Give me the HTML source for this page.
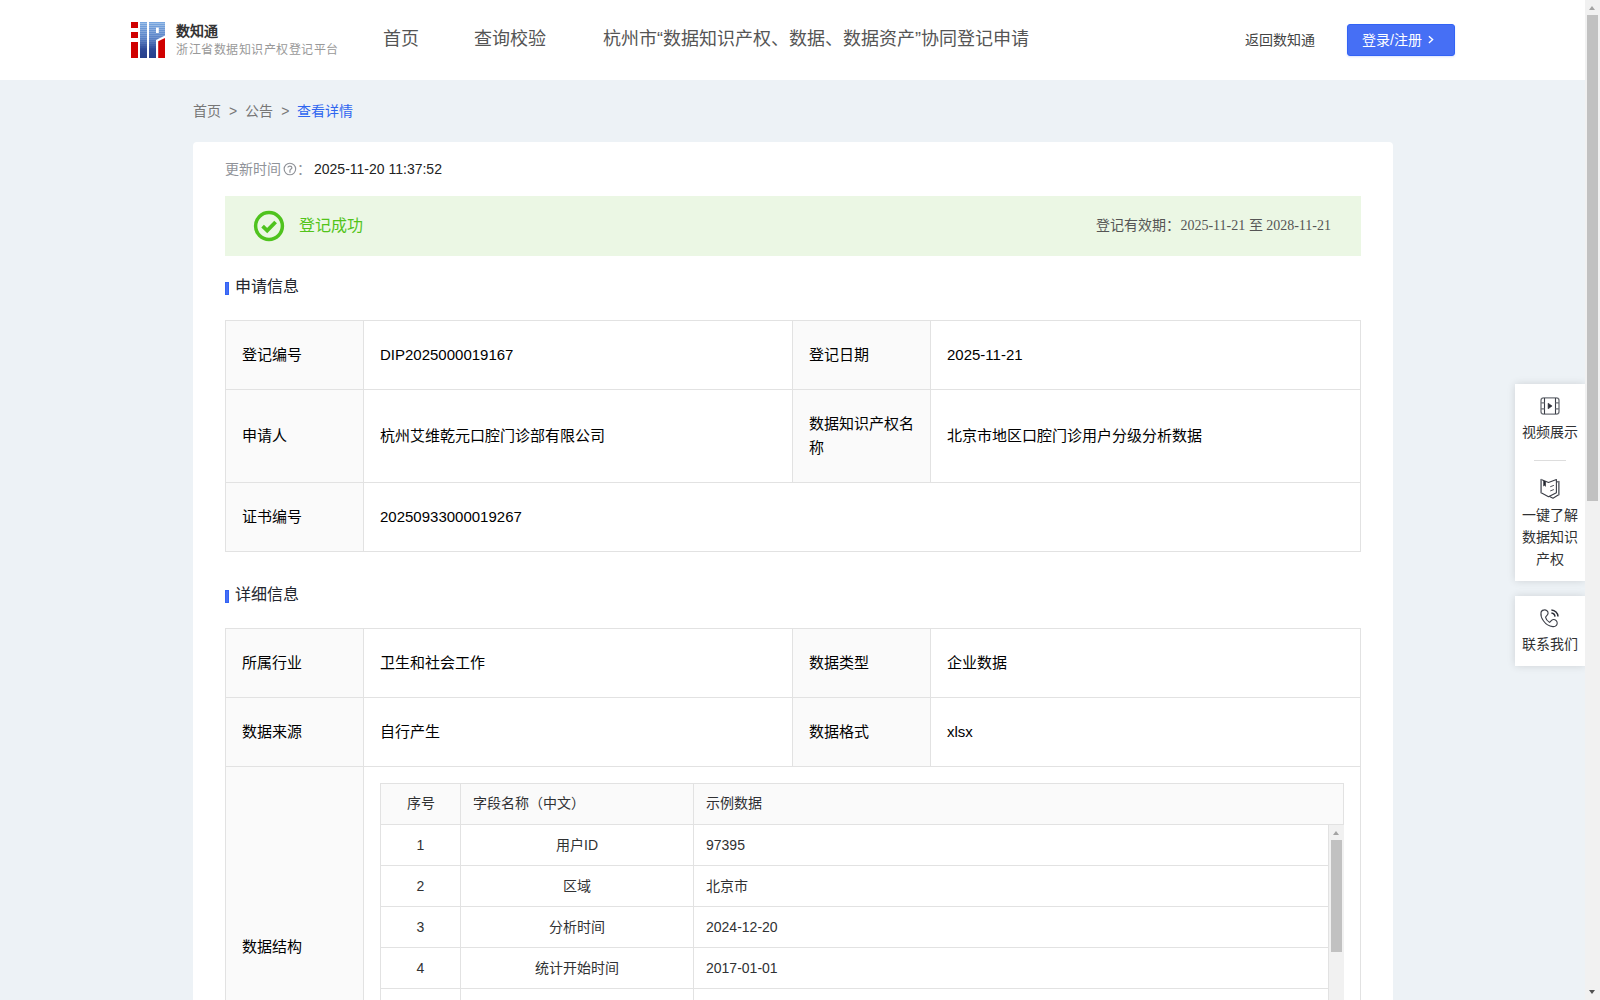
<!DOCTYPE html>
<html lang="zh-CN">
<head>
<meta charset="utf-8">
<title>查看详情</title>
<style>
*{box-sizing:border-box;margin:0;padding:0}
html,body{width:1600px;height:1000px;overflow:hidden;background:#edf2f6;font-family:"Liberation Sans",sans-serif;color:#333;font-size:14px}
#page{position:absolute;left:0;top:0;width:1585px;height:1000px;overflow:hidden;background:#edf2f6}
#hdr{position:absolute;left:0;top:0;width:1585px;height:80px;background:#fff}
.abs{position:absolute;white-space:nowrap}
.t{position:absolute;white-space:nowrap;line-height:20px;height:20px}
#sb{position:absolute;left:1585px;top:0;width:15px;height:1000px;background:#f1f1f1}
#sb .th{position:absolute;left:2px;top:15px;width:11px;height:486px;background:#c1c1c1}
.arr{position:absolute;width:0;height:0;border-left:3.5px solid transparent;border-right:3.5px solid transparent}
.arr.up{border-bottom:4px solid #a3a3a3}
.arr.dn{border-top:4px solid #505050}
#card{position:absolute;left:193px;top:142px;width:1200px;height:900px;background:#fff;border-radius:4px}
#banner{position:absolute;left:225px;top:196px;width:1136px;height:60px;background:#ebf7e4}
.sec{position:absolute;left:225px;height:20px;line-height:20px;font-size:16px;color:#23262f;white-space:nowrap}
.sec i{position:absolute;left:0;top:5px;width:4px;height:13px;background:#466ff5;border:1px solid #3263f5}
.sec span{position:absolute;left:11px;top:0}
table{border-collapse:collapse;table-layout:fixed}
.info{position:absolute;left:225px;width:1135px}
.info td{border:1px solid #e2e2e2;font-size:15px;line-height:24px;padding:22px 16px 22px 16px;color:#000;vertical-align:middle;word-break:break-all}
.info td.l{background:#fafafa;padding-right:12px}

#t2row3{position:absolute;left:225px;top:766px;width:1136px;height:300px;border:1px solid #e2e2e2}
#t2row3 .lc{position:absolute;left:0;top:0;width:138px;height:300px;background:#fafafa;border-right:1px solid #e2e2e2}
.in{position:absolute;font-size:14px;color:#303133}
.in td{border:1px solid #e2e2e2;height:41px;line-height:20px;padding:0 12px 1px 12px;font-size:14px;color:#303133;vertical-align:middle;white-space:nowrap}
.in td.c{text-align:center}
.in tr.h td{background:#fafafa;color:#303133;padding-bottom:2px}
.fl{position:absolute;left:1515px;width:70px;background:#fff;box-shadow:0 0 8px rgba(0,0,0,.13)}
.ft{position:absolute;left:1515px;width:70px;text-align:center;font-size:14px;line-height:22px;height:22px;color:#303133;white-space:nowrap}
</style>
</head>
<body>
<div id="page">
<div id="hdr">
<svg class="abs" style="left:131px;top:22px" width="34" height="36" viewBox="0 0 34 36">
<defs><linearGradient id="g" x1="0" y1="0" x2="0" y2="1"><stop offset="0" stop-color="#79a8e0"/><stop offset="0.45" stop-color="#5a82c6"/><stop offset="0.75" stop-color="#2f4a98"/><stop offset="1" stop-color="#27408b"/></linearGradient><clipPath id="lc"><rect x="9" y="0" width="7" height="36"/><path d="M18 0H34V13.6L25 18V36H18Z M25 5.5V11H27.8V5.5Z" clip-rule="evenodd"/></clipPath></defs>
<rect x="0" y="0" width="7" height="6" fill="#d00000"/>
<rect x="0" y="10" width="7" height="6" fill="#d00000"/>
<rect x="0" y="20" width="7" height="16" fill="#d00000"/>
<rect x="9" y="0" width="7" height="36" fill="url(#g)"/>
<path d="M18 0H34V13.6L25 18V36H18Z M25 5.5V11H27.8V5.5Z" fill="url(#g)" fill-rule="evenodd"/>
<g clip-path="url(#lc)"><rect x="9" y="1" width="7" height="1" fill="#fff" opacity="0.3"/><rect x="18" y="1" width="16" height="1" fill="#fff" opacity="0.3"/><rect x="9" y="3" width="7" height="1" fill="#fff" opacity="0.277"/><rect x="18" y="3" width="16" height="1" fill="#fff" opacity="0.277"/><rect x="9" y="5" width="7" height="1" fill="#fff" opacity="0.254"/><rect x="18" y="5" width="16" height="1" fill="#fff" opacity="0.254"/><rect x="9" y="7" width="7" height="1" fill="#fff" opacity="0.231"/><rect x="18" y="7" width="16" height="1" fill="#fff" opacity="0.231"/><rect x="9" y="9" width="7" height="1" fill="#fff" opacity="0.208"/><rect x="18" y="9" width="16" height="1" fill="#fff" opacity="0.208"/><rect x="9" y="11" width="7" height="1" fill="#fff" opacity="0.185"/><rect x="18" y="11" width="16" height="1" fill="#fff" opacity="0.185"/><rect x="9" y="13" width="7" height="1" fill="#fff" opacity="0.162"/><rect x="18" y="13" width="16" height="1" fill="#fff" opacity="0.162"/><rect x="9" y="15" width="7" height="1" fill="#fff" opacity="0.138"/><rect x="18" y="15" width="16" height="1" fill="#fff" opacity="0.138"/><rect x="9" y="17" width="7" height="1" fill="#fff" opacity="0.115"/><rect x="18" y="17" width="16" height="1" fill="#fff" opacity="0.115"/><rect x="9" y="19" width="7" height="1" fill="#fff" opacity="0.092"/><rect x="18" y="19" width="16" height="1" fill="#fff" opacity="0.092"/><rect x="9" y="21" width="7" height="1" fill="#fff" opacity="0.069"/><rect x="18" y="21" width="16" height="1" fill="#fff" opacity="0.069"/><rect x="9" y="23" width="7" height="1" fill="#fff" opacity="0.046"/><rect x="18" y="23" width="16" height="1" fill="#fff" opacity="0.046"/><rect x="9" y="25" width="7" height="1" fill="#fff" opacity="0.023"/><rect x="18" y="25" width="16" height="1" fill="#fff" opacity="0.023"/></g><path d="M27.2 19.2L34 16V36H27.2Z" fill="#d00000"/>
</svg>
<div class="t" style="left:176px;top:21px;font-size:14px;font-weight:bold;color:#333">数知通</div>
<div class="t" style="left:176px;top:40px;font-size:12px;letter-spacing:0.5px;color:#999">浙江省数据知识产权登记平台</div>
<div class="t" style="left:383px;top:29px;font-size:18px;color:#555">首页</div>
<div class="t" style="left:474px;top:29px;font-size:18px;color:#555">查询校验</div>
<div class="t" style="left:603px;top:29px;font-size:18px;color:#555">杭州市“数据知识产权、数据、数据资产”协同登记申请</div>
<div class="t" style="left:1245px;top:30px;font-size:14px;color:#444">返回数知通</div>
<div class="abs" style="left:1347px;top:24px;width:108px;height:32px;background:#466ff5;border:1px solid #3263f5;border-radius:3px;box-shadow:0 1px 2px rgba(70,111,245,.2)"></div>
<div class="t" style="left:1362px;top:30px;font-size:14px;color:#fff">登录/注册</div>
<svg class="abs" style="left:1426px;top:33px" width="12" height="14" viewBox="0 0 12 14"><path d="M2.9 3.3L6.6 6.6L2.9 9.9" fill="none" stroke="#fff" stroke-width="1.4"/></svg>
</div>

<div class="t" style="left:193px;top:101px;font-size:14px;color:#777">首页<span style="margin:0 8px">&gt;</span>公告<span style="margin:0 8px">&gt;</span><span style="color:#2f66f0">查看详情</span></div>

<div id="card"></div>
<div class="t" style="left:225px;top:159px;font-size:14px;color:#909399">更新时间</div>
<svg class="abs" style="left:283px;top:162px" width="14" height="15" viewBox="0 0 14 15"><circle cx="6.9" cy="7" r="5.75" fill="none" stroke="#909399" stroke-width="1.15"/><path d="M4.9 5.6C4.9 3.7 8.9 3.7 8.9 5.7C8.9 7 7 7 6.95 8.6V10.7" fill="none" stroke="#909399" stroke-width="1.2"/></svg>
<div class="t" style="left:297px;top:159px;font-size:14px;color:#909399">：</div>
<div class="t" style="left:314px;top:159px;font-size:14px;color:#222">2025-11-20 11:37:52</div>

<div id="banner"></div>
<svg class="abs" style="left:253px;top:210px" width="32" height="32" viewBox="0 0 32 32"><circle cx="16" cy="16" r="13.4" fill="none" stroke="#4fc31e" stroke-width="3.5"/><path d="M9.6 16.2L14.2 20.6L22.6 12" fill="none" stroke="#4fc31e" stroke-width="3.8" stroke-linejoin="miter"/></svg>
<div class="t" style="left:299px;top:216px;font-size:16px;color:#52c41a">登记成功</div>
<div class="t" style="right:254px;top:216px;font-size:14px;color:#555;font-family:'Liberation Serif',serif">登记有效期：2025-11-21 至 2028-11-21</div>

<div class="sec" style="top:277px"><i></i><span style="left:10px">申请信息</span></div>
<table class="info" style="top:320px">
<colgroup><col style="width:138px"><col style="width:429px"><col style="width:138px"><col style="width:430px"></colgroup>
<tr style="height:69px"><td class="l">登记编号</td><td>DIP2025000019167</td><td class="l">登记日期</td><td>2025-11-21</td></tr>
<tr style="height:93px"><td class="l">申请人</td><td>杭州艾维乾元口腔门诊部有限公司</td><td class="l">数据知识产权名称</td><td>北京市地区口腔门诊用户分级分析数据</td></tr>
<tr style="height:69px"><td class="l">证书编号</td><td colspan="3">20250933000019267</td></tr>
</table>

<div class="sec" style="top:585px"><i></i><span style="left:10px">详细信息</span></div>

<table class="info" style="top:628px">
<colgroup><col style="width:138px"><col style="width:429px"><col style="width:138px"><col style="width:430px"></colgroup>
<tr style="height:69px"><td class="l">所属行业</td><td>卫生和社会工作</td><td class="l">数据类型</td><td>企业数据</td></tr>
<tr style="height:69px"><td class="l">数据来源</td><td>自行产生</td><td class="l">数据格式</td><td>xlsx</td></tr>
</table>
<div id="t2row3"><div class="lc"></div></div>
<div class="t" style="left:242px;top:935px;font-size:15px;line-height:24px;height:24px;color:#000">数据结构</div>
<table class="in" style="left:380px;top:783px;width:963px">
<colgroup><col style="width:80px"><col style="width:233px"><col style="width:650px"></colgroup>
<tr class="h"><td class="c">序号</td><td>字段名称（中文）</td><td>示例数据</td></tr>
</table>
<table class="in" style="left:380px;top:824px;width:948px">
<colgroup><col style="width:80px"><col style="width:233px"><col style="width:635px"></colgroup>
<tr><td class="c">1</td><td class="c">用户ID</td><td>97395</td></tr>
<tr><td class="c">2</td><td class="c">区域</td><td>北京市</td></tr>
<tr><td class="c">3</td><td class="c">分析时间</td><td>2024-12-20</td></tr>
<tr><td class="c">4</td><td class="c">统计开始时间</td><td>2017-01-01</td></tr>
<tr><td class="c">5</td><td class="c">统计结束时间</td><td>2024-12-20</td></tr>
</table>
<div class="abs" style="left:1329px;top:825px;width:15px;height:200px;background:#f1f1f1"><div class="arr up" style="left:4px;top:6px"></div><div class="abs" style="left:2px;top:15px;width:11px;height:112px;background:#c1c1c1"></div></div>

<div class="fl" style="top:384px;height:197px"></div>
<div class="abs" style="left:1534px;top:460px;width:32px;height:1px;background:#ddd"></div>
<div class="ft" style="top:421px">视频展示</div>
<div class="ft" style="top:504px">一键了解</div>
<div class="ft" style="top:526px">数据知识</div>
<div class="ft" style="top:548px">产权</div>
<div class="fl" style="top:596px;height:70px"></div>
<svg class="abs" style="left:1535px;top:391px" width="30" height="30" viewBox="0 0 30 30" fill="none" stroke="#3b3e47" stroke-width="1.1">
<rect x="6" y="6.9" width="18" height="16.2" rx="2.6" stroke="#6e7178" stroke-width="1.3"/>
<path d="M9.5 7V23M20.5 7V23"/>
<path d="M6 11.9H9.5M6 17.9H9.5M20.5 11.9H24M20.5 17.9H24" stroke="#6e7178"/>
<path d="M13.1 12.2V17.8L17.1 15Z" fill="#2b2e37" stroke="#2b2e37" stroke-width=".6" stroke-linejoin="round"/>
</svg>
<svg class="abs" style="left:1535px;top:474px" width="30" height="30" viewBox="0 0 30 30" fill="none" stroke="#3b3e47" stroke-width="1.1" stroke-linejoin="round" stroke-linecap="round">
<path d="M6.2 5.6L13.5 8.4L21.4 5.5V18.7L13.5 22.8L6.2 18.8Z"/>
<path d="M6.2 5.6V18.8" stroke="#7b7e85" stroke-width="1.5"/>
<path d="M22 8L23.6 7.5V20.8L18 24.2L14.6 22.4"/>
<path d="M23.9 7.6V20.8" stroke="#7b7e85" stroke-width="1.5"/>
<path d="M8.3 6.5V12.6L9.6 11.6L10.8 12.9V7.5Z" fill="#23262f" stroke="none"/>
<path d="M15.6 12.6L18.5 11.5M15.6 16.8L18.5 15.7" stroke-width="1" stroke="#4a4d56"/>
</svg>
<svg class="abs" style="left:1535px;top:603px" width="30" height="30" viewBox="0 0 30 30" fill="none" stroke="#3b3e47" stroke-width="1.1" stroke-linejoin="round" stroke-linecap="round">
<path d="M9.3 6.9C11.2 6.7 13.2 8.2 13.1 10.1C13 12.3 10.6 13.2 10.6 14.4C10.8 16 12.8 18.2 14.5 19.4C15.6 18.6 16.6 16.6 18.4 16.5C20.6 16.4 22.4 18.4 22.2 20.3C22 22.4 20.2 23.8 17.8 23.6C14.4 23.4 10.6 21 8.4 17.8C6.6 15.2 5.6 12.2 6 9.6C6.3 7.9 7.6 7 9.3 6.9Z"/>
<path d="M16.4 7.1C20 7.3 22.9 10 23 13.5" stroke="#2b2e37" stroke-width="1.5" stroke-linecap="butt"/>
<path d="M16.4 9.9C18.5 10.1 19.9 11.6 20 13.6" stroke="#2b2e37" stroke-width="1.5" stroke-linecap="butt"/>
</svg>

<div class="ft" style="top:633px">联系我们</div>
</div>
<div id="sb"><div class="th"></div><div class="arr up" style="left:4px;top:6px"></div><div class="arr dn" style="left:4px;top:990px"></div></div>
</body>
</html>
